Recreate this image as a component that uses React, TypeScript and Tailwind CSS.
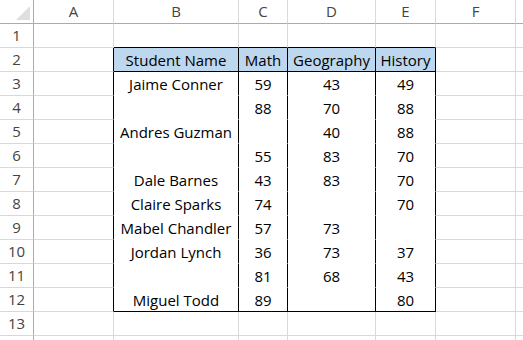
import React from "react";

const cols = ["", "A", "B", "C", "D", "E", "F", ""];
const data: string[][] = [
  ["", "", "", ""],
  ["Student Name", "Math", "Geography", "History"],
  ["Jaime Conner", "59", "43", "49"],
  ["", "88", "70", "88"],
  ["Andres Guzman", "", "40", "88"],
  ["", "55", "83", "70"],
  ["Dale Barnes", "43", "83", "70"],
  ["Claire Sparks", "74", "", "70"],
  ["Mabel Chandler", "57", "73", ""],
  ["Jordan Lynch", "36", "73", "37"],
  ["", "81", "68", "43"],
  ["Miguel Todd", "89", "", "80"],
  ["", "", "", ""],
  ["", "", "", ""],
];

const inTable = (r: number, c: number) => r >= 2 && r <= 12 && c >= 2 && c <= 5;

export default function App() {
  const cells: React.ReactNode[] = [];
  cols.forEach((h, c) => {
    if (c === 0) {
      cells.push(
        <div key={"h0"} className="relative bg-white border-r border-b border-r-[#ababab] border-b-[#ababab]">
          <svg className="absolute right-[3px] bottom-[3px]" width="14" height="14" viewBox="0 0 14 14">
            <polygon points="14,0 14,14 0,14" fill="#dfdfdf" />
          </svg>
        </div>
      );
    } else {
      cells.push(
        <div
          key={"h" + c}
          className="flex items-center justify-center bg-white border-r border-b border-r-[#d9d9d9] border-b-[#ababab] text-[15px] text-[#444444]"
        >
          {h}
        </div>
      );
    }
  });
  data.forEach((row, i) => {
    const r = i + 1;
    cols.forEach((_, c) => {
      if (c === 0) {
        cells.push(
          <div
            key={r + "-0"}
            className="flex items-center justify-center bg-white border-r border-b border-r-[#ababab] border-b-[#d9d9d9] text-[15px] text-[#444444]"
          >
            {r <= 13 ? r : ""}
          </div>
        );
        return;
      }
      const t = inTable(r, c);
      const rightBlack = t || inTable(r, c + 1);
      let bottom = "border-b-[#d9d9d9]";
      if (t) {
        bottom = r === 2 || r === 12 ? "border-b-black" : "border-b-white";
      } else if (inTable(r + 1, c)) {
        bottom = "border-b-black";
      }
      const right = rightBlack ? "border-r-black" : "border-r-[#d9d9d9]";
      const bg = t && r === 2 ? "bg-[#bdd7ee]" : "bg-white";
      const text = t ? row[c - 2] : "";
      cells.push(
        <div
          key={r + "-" + c}
          className={`flex items-center justify-center border-r border-b ${right} ${bottom} ${bg} text-[15px] leading-[20px] text-black whitespace-nowrap overflow-hidden`}
        >
          {text}
        </div>
      );
    });
  });
  return (
    <div
      className="w-[523px] h-[340px] overflow-hidden bg-white"
      style={{ fontFamily: "'Open Sans', 'Liberation Sans', sans-serif" }}
    >
      <div className="grid grid-cols-[34px_80px_125px_49px_88px_60px_80px_40px] auto-rows-[24px]">
        {cells}
      </div>
    </div>
  );
}
